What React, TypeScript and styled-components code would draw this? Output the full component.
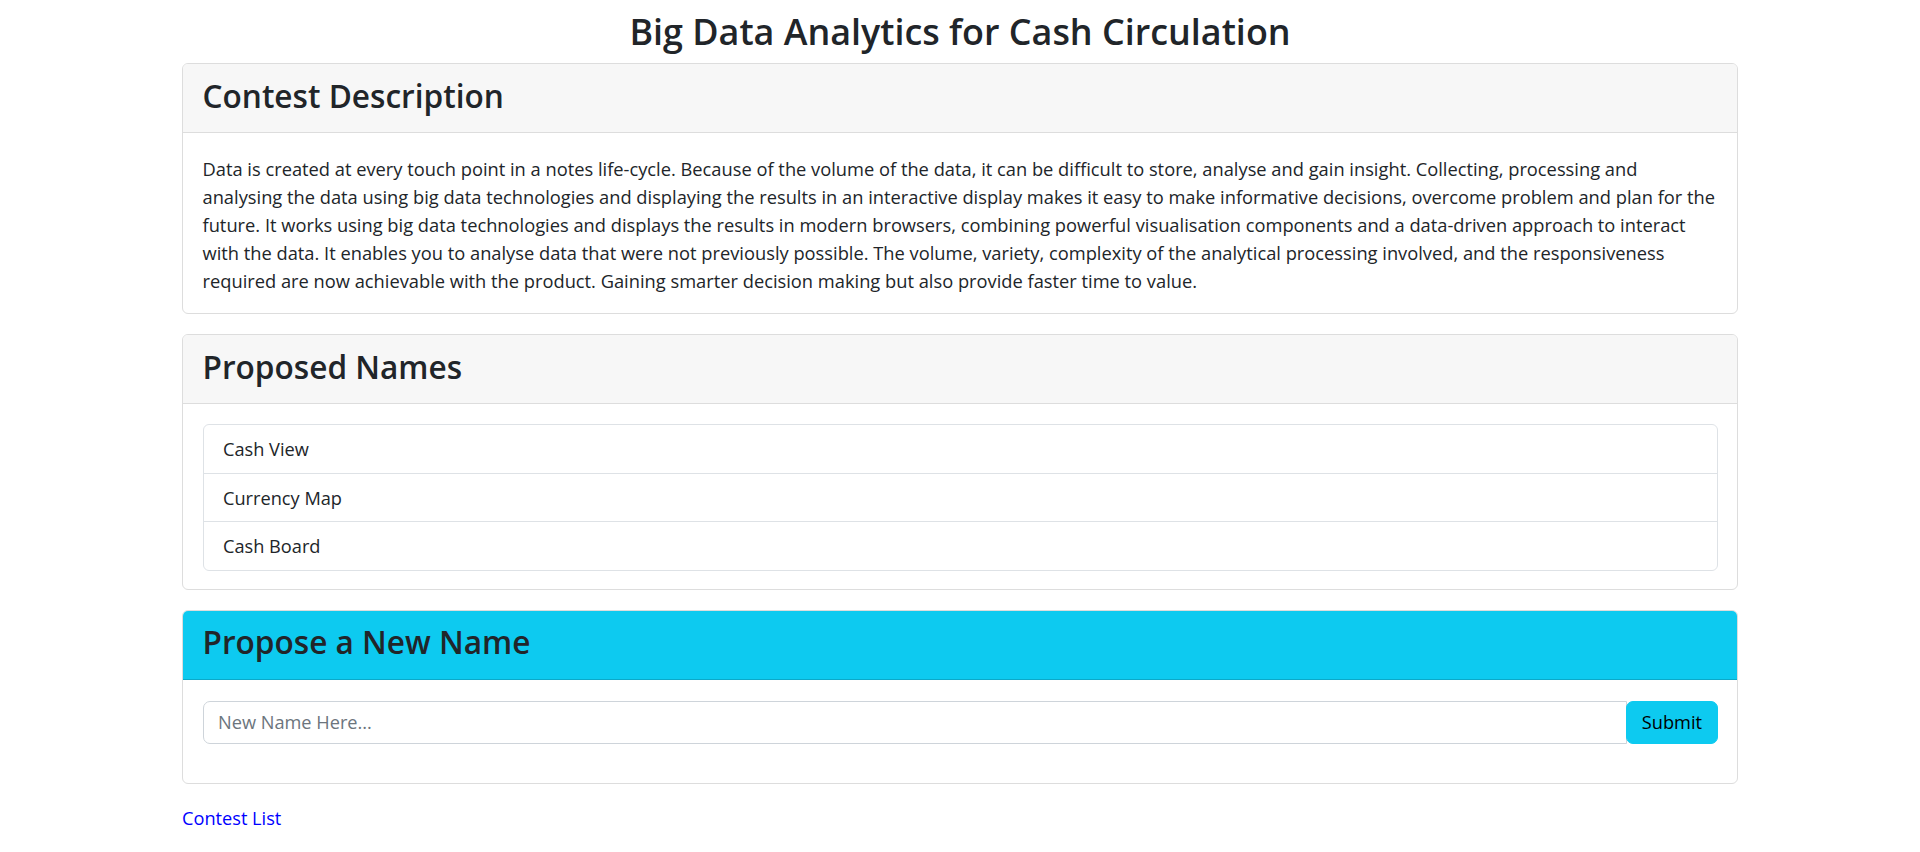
import React from "react";
import styled, { createGlobalStyle } from "styled-components";

const GlobalStyle = createGlobalStyle`
  html, body {
    margin: 0;
    padding: 0;
    background: #ffffff;
  }
  body {
    font-family: "Open Sans", "Noto Sans", sans-serif;
    color: #212529;
    font-size: 18.2px;
    line-height: 27.6px;
  }
  * { box-sizing: border-box; }
`;

const Page = styled.div`
  padding: 11px 0 30px;
`;

const Container = styled.main`
  width: 1556px;
  margin: 0 auto;
`;

const Title = styled.h1`
  margin: 0 0 11px;
  text-align: center;
  font-size: 35.9px;
  line-height: 41px;
  font-weight: 600;
  color: #212529;
`;

const Card = styled.section`
  border: 1px solid #dddddd;
  border-radius: 6px;
  overflow: hidden;
  background: #ffffff;
  margin-bottom: 20px;
`;

const CardHeader = styled.header<{ $info?: boolean }>`
  height: 69px;
  padding: 13.5px 19.5px 0;
  background: ${(p) => (p.$info ? "#0dcaf0" : "#f7f7f7")};
  border-bottom: 1px solid ${(p) => (p.$info ? "#0ba9c9" : "#dddddd")};
`;

const HeaderTitle = styled.h2`
  margin: 0;
  font-size: 31.6px;
  line-height: 36px;
  font-weight: 600;
  color: #212529;
`;

const CardBody = styled.div<{ $pad: string }>`
  padding: ${(p) => p.$pad};
`;

const Description = styled.p`
  margin: 0;
  white-space: nowrap;
  font-size: 18.3px;
  line-height: 28px;
`;

const ListGroup = styled.ul`
  list-style: none;
  margin: 0;
  padding: 0;
  border: 1px solid #dee2e6;
  border-radius: 6px;
`;

const ListItem = styled.li`
  padding: 11px 19.5px 9px;
  line-height: 27.6px;
  font-size: 18.2px;
  border-bottom: 1px solid #dee2e6;
  &:last-child {
    border-bottom: none;
  }
`;

const InputGroup = styled.form`
  display: flex;
  align-items: stretch;
`;

const TextInput = styled.input`
  flex: 1;
  min-width: 0;
  height: 43.4px;
  padding: 7px 14.5px;
  font-family: inherit;
  font-size: 18.2px;
  line-height: 27.6px;
  color: #212529;
  border: 1px solid #ced4da;
  border-radius: 7px 0 0 7px;
  outline: none;
  &::placeholder {
    color: #6c757d;
  }
`;

const SubmitButton = styled.button`
  margin-left: -1px;
  height: 43.4px;
  padding: 0 14.5px;
  font-family: inherit;
  font-size: 18.2px;
  line-height: 27.6px;
  color: #000000;
  background: #0dcaf0;
  border: 1px solid #0dcaf0;
  border-radius: 7px;
  cursor: pointer;
`;

const BackLink = styled.a`
  display: inline-block;
  margin-top: 1px;
  color: #0000ff;
  text-decoration: none;
  font-size: 18.2px;
  line-height: 27.6px;
`;

const lines = [
  "Data is created at every touch point in a notes life-cycle. Because of the volume of the data, it can be difficult to store, analyse and gain insight. Collecting, processing and",
  "analysing the data using big data technologies and displaying the results in an interactive display makes it easy to make informative decisions, overcome problem and plan for the",
  "future. It works using big data technologies and displays the results in modern browsers, combining powerful visualisation components and a data-driven approach to interact",
  "with the data. It enables you to analyse data that were not previously possible. The volume, variety, complexity of the analytical processing involved, and the responsiveness",
  "required are now achievable with the product. Gaining smarter decision making but also provide faster time to value.",
];

const names = ["Cash View", "Currency Map", "Cash Board"];

export default function App() {
  return (
    <>
      <GlobalStyle />
      <Page>
        <Container>
          <Title>Big Data Analytics for Cash Circulation</Title>

          <Card>
            <CardHeader>
              <HeaderTitle>Contest Description</HeaderTitle>
            </CardHeader>
            <CardBody $pad="21.5px 19.5px 18.5px">
              <Description>
                {lines.map((l, i) => (
                  <React.Fragment key={i}>
                    {l}
                    {i < lines.length - 1 && <br />}
                  </React.Fragment>
                ))}
              </Description>
            </CardBody>
          </Card>

          <Card>
            <CardHeader>
              <HeaderTitle>Proposed Names</HeaderTitle>
            </CardHeader>
            <CardBody $pad="20px 19.5px 18px">
              <ListGroup>
                {names.map((n) => (
                  <ListItem key={n}>{n}</ListItem>
                ))}
              </ListGroup>
            </CardBody>
          </Card>

          <Card>
            <CardHeader $info>
              <HeaderTitle>Propose a New Name</HeaderTitle>
            </CardHeader>
            <CardBody $pad="21px 19.5px 39px">
              <InputGroup onSubmit={(e) => e.preventDefault()}>
                <TextInput type="text" placeholder="New Name Here..." />
                <SubmitButton type="submit">Submit</SubmitButton>
              </InputGroup>
            </CardBody>
          </Card>

          <BackLink href="#">Contest List</BackLink>
        </Container>
      </Page>
    </>
  );
}
